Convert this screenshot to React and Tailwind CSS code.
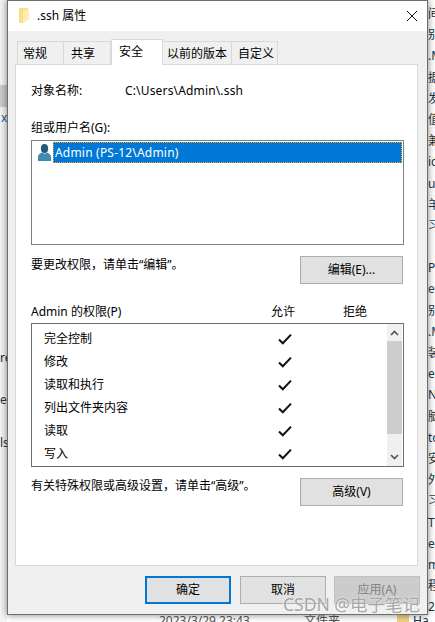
const FONT = { fontFamily: '"Noto Sans", "Noto Sans CJK SC", sans-serif' };

function Btn({ children, className }) {
  return (
    <div className={"flex h-[28px] shrink-0 items-center justify-center " + className}>
      {children}
    </div>
  );
}

function Check() {
  return (
    <svg width="14" height="12" viewBox="0 0 14 12" className="block">
      <path d="M1 6.5 L4.8 10.3 L13 1.6" fill="none" stroke="#111" strokeWidth="2" />
    </svg>
  );
}

const perms = ["完全控制", "修改", "读取和执行", "列出文件夹内容", "读取", "写入"];

const rightBg = [
  ["间:", "#222"], ["别5", "#234"], [".M", "#134"], ["据", "#333"], ["发", "#234"], ["值", "#333"], ["兼", "#333"], ["ic", "#234"], ["uc", "#234"], ["羊", "#333"], ["习", "#345"], ["", "#000"],
  ["Pa", "#234"], ["ee", "#444"], ["别5", "#234"], [".M", "#134"], ["装", "#333"], ["eg", "#333"], ["N", "#135"], ["脑", "#333"], ["to", "#135"], ["安", "#333"], ["外", "#135"], ["习", "#345"], ["Tl", "#234"], ["eg", "#333"], ["m", "#333"], ["程", "#333"], ["21", "#234"],
];

export default function App() {
  return (
    <div className="relative h-[622px] w-[435px] overflow-hidden bg-white text-[12px] leading-[20px] text-black" style={FONT}>
      {/* file list behind the dialog: left edge */}
      <div className="absolute left-0 top-0 h-[622px] w-[7px] overflow-hidden bg-[#f4f4f4]">
        <div className="mt-[85px] h-[22px] bg-[#cccccc]" />
        <div className="mt-[1px] h-[20px] whitespace-nowrap pl-[1px] text-[#1a5a9c]">x</div>
        <div className="mt-[220px] h-[20px] whitespace-nowrap text-[#222]">re</div>
        <div className="mt-[22px] h-[20px] whitespace-nowrap text-[#333]">el</div>
        <div className="mt-[23px] h-[20px] whitespace-nowrap text-[#234]">ls</div>
      </div>

      {/* file list behind the dialog: right edge */}
      <div className="absolute left-[428px] top-0 flex h-[622px] w-[7px] flex-col overflow-hidden bg-white pt-[3px]">
        {rightBg.map(([t, c], i) => (
          <div key={i} className="h-[21.2px] shrink-0 whitespace-nowrap leading-[21px]" style={{ color: c }}>{t}</div>
        ))}
      </div>

      {/* file list behind the dialog: bottom edge */}
      <div className="absolute bottom-0 left-[159px] flex h-[8px] items-start overflow-hidden leading-[14px] text-[#555]">
        <span className="w-[145px] shrink-0 whitespace-nowrap">2023/3/29 23:43</span>
        <span className="w-[93px] shrink-0">文件夹</span>
        <span className="h-[8px] w-[12px] shrink-0 bg-[#f2d27c]" />
        <span className="ml-[4px] whitespace-nowrap text-[#234]">Ha</span>
      </div>

      {/* properties window */}
      <div className="absolute left-[7px] top-0 flex h-[615px] w-[421px] flex-col border border-[#6d6d6d] bg-[#f0f0f0] shadow-[0_0_7px_rgba(0,0,0,0.5)]">
        <div className="flex h-[30px] shrink-0 items-center bg-white pl-[11px] pr-[10px]">
          <svg width="10" height="15" viewBox="0 0 10 15" className="mt-[-1px]">
            <path d="M0 0H9V12L4 15H0Z" fill="#fcdc85" />
            <path d="M4 2H10V11L4 15Z" fill="#ffeeb0" />
          </svg>
          <span className="ml-[8px] mt-[-1px]">.ssh 属性</span>
          <svg width="10" height="10" viewBox="0 0 10 10" className="ml-auto mt-[-1px]">
            <path d="M0 0L10 10M10 0L0 10" stroke="#111" strokeWidth="1" />
          </svg>
        </div>

        <div className="flex min-h-0 flex-1 flex-col px-[7px]">
          <div className="flex h-[33px] shrink-0 items-end pl-[2px]">
            <div className="flex h-[23px] w-[47px] items-center border border-b-0 border-[#d9d9d9] bg-[#f0f0f0] pl-[5px] pt-[1px]">常规</div>
            <div className="flex h-[23px] w-[47px] items-center border border-b-0 border-l-0 border-[#d9d9d9] bg-[#f0f0f0] pl-[7px] pt-[1px]">共享</div>
            <div className="z-10 -mb-px flex h-[26px] w-[52px] items-center border border-b-0 border-[#d9d9d9] bg-white pb-[1px] pl-[7px]">安全</div>
            <div className="flex h-[23px] w-[69px] items-center border border-b-0 border-l-0 border-[#d9d9d9] bg-[#f0f0f0] pl-[4px] pt-[1px]">以前的版本</div>
            <div className="flex h-[23px] w-[46px] items-center border border-b-0 border-l-0 border-[#d9d9d9] bg-[#f0f0f0] pl-[6px] pt-[1px]">自定义</div>
          </div>

          <div className="flex h-[502px] w-[403px] shrink-0 flex-col border border-[#d9d9d9] bg-white pl-[15px] pr-[13px]">
            <div className="mt-[16px] flex h-[20px] shrink-0">
              <span className="w-[94px]">对象名称:</span>
              <span className="tracking-[0.16px]">C:\Users\Admin\.ssh</span>
            </div>
            <div className="mt-[17px] h-[20px] shrink-0">组或用户名(G):</div>

            <div className="mt-[2px] h-[105px] shrink-0 border border-[#808080] bg-white pl-[6px] pr-[1px] pt-[1px]">
              <div className="flex h-[21px] items-center">
                <svg width="13" height="17" viewBox="0 0 13 17" className="mr-[2px] shrink-0">
                  <ellipse cx="6.5" cy="4.5" rx="3.6" ry="4.5" fill="#27587a" />
                  <path d="M0 17V12.5C0 10.5 2.5 9 4.5 8.5L6.5 10L8.5 8.5C10.5 9 13 10.5 13 12.5V17Z" fill="#3f8bb0" />
                </svg>
                <div className="flex h-[21px] flex-1 items-center border border-dotted border-[#f0a030] bg-[#0078d7] pl-[1px] tracking-[0.2px] text-white">
                  Admin (PS-12\Admin)
                </div>
              </div>
            </div>

            <div className="mt-[11px] flex h-[28px] shrink-0 items-start justify-between pr-[1px]">
              <span className="mt-[-1px]">要更改权限，请单击“编辑”。</span>
              <Btn className="w-[103px] border border-[#adadad] bg-[#e1e1e1]">编辑(E)...</Btn>
            </div>

            <div className="mt-[18px] flex h-[20px] shrink-0 items-center">
              <span className="flex-1">Admin 的权限(P)</span>
              <span className="w-[72px]">允许</span>
              <span className="w-[61px]">拒绝</span>
            </div>

            <div className="mt-[1px] flex h-[144px] shrink-0 border border-[#6d6d6d] bg-white">
              <div className="flex-1 pl-[12px] pt-[3px]">
                {perms.map((p) => (
                  <div key={p} className="flex h-[23px] items-center">
                    <span className="w-[234px]">{p}</span>
                    <Check />
                  </div>
                ))}
              </div>
              <div className="mr-[1px] flex w-[15px] shrink-0 flex-col bg-[#f0f0f0]">
                <div className="flex h-[17px] shrink-0 items-center justify-center">
                  <svg width="9" height="6" viewBox="0 0 9 6"><path d="M1 5L4.5 1.5L8 5" fill="none" stroke="#555" strokeWidth="1.7" /></svg>
                </div>
                <div className="h-[93px] shrink-0 bg-[#cdcdcd]" />
                <div className="flex flex-1 items-end justify-center pb-[6px]">
                  <svg width="9" height="6" viewBox="0 0 9 6"><path d="M1 1L4.5 4.5L8 1" fill="none" stroke="#555" strokeWidth="1.7" /></svg>
                </div>
              </div>
            </div>

            <div className="mt-[11px] flex h-[28px] shrink-0 items-start justify-between pr-[1px]">
              <span className="mt-[-2px]">有关特殊权限或高级设置，请单击“高级”。</span>
              <Btn className="w-[103px] border border-[#adadad] bg-[#e1e1e1]">高级(V)</Btn>
            </div>
          </div>

          <div className="mt-[10px] flex shrink-0 justify-end gap-[8px]">
            <Btn className="mr-[1px] w-[86px] border-2 border-[#0078d7] bg-[#e1e1e1]">确定</Btn>
            <Btn className="w-[86px] border border-[#adadad] bg-[#e1e1e1]">取消</Btn>
            <Btn className="w-[86px] border border-[#bfbfbf] bg-[#cccccc] text-[#838383]">应用(A)</Btn>
          </div>
        </div>
      </div>

      {/* watermark */}
      <div className="absolute left-[283px] top-[592px] whitespace-nowrap text-[17.5px] leading-[24px] text-[#a6a6a6] [text-shadow:0_0_2px_#fff]">
        CSDN @电子笔记
      </div>
    </div>
  );
}
